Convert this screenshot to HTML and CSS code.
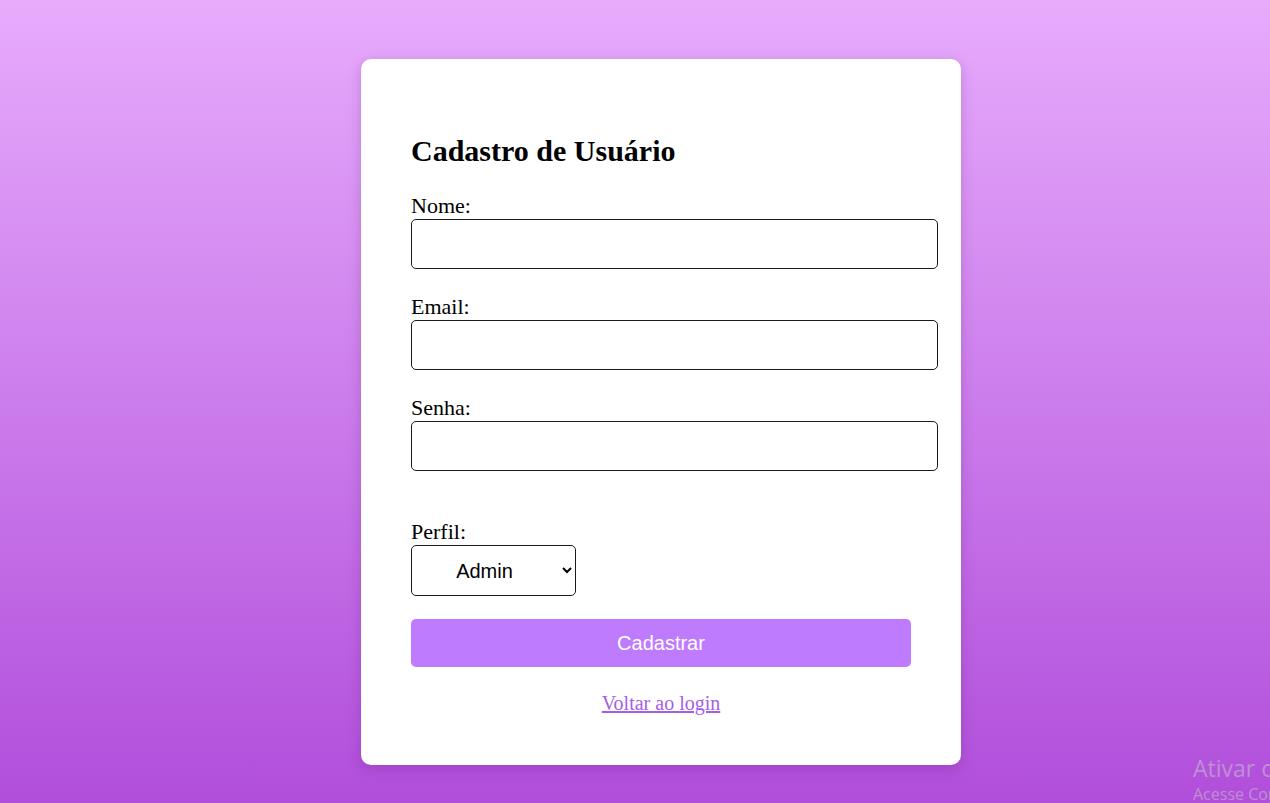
FILE: index.html
```html
<!DOCTYPE html>
<html lang="pt-BR">
<head>
<meta charset="utf-8">
<title>Cadastro de Usuário</title>
<link rel="stylesheet" href="styles.css">
</head>
<body>
  <main class="card">
    <h2 class="title">Cadastro de Usuário</h2>
    <form class="form">
      <label class="label" for="nome">Nome:</label>
      <input class="field" id="nome" type="text">
      <label class="label" for="email">Email:</label>
      <input class="field" id="email" type="email">
      <label class="label" for="senha">Senha:</label>
      <input class="field" id="senha" type="password">
      <label class="label label-perfil" for="perfil">Perfil:</label>
      <select class="select" id="perfil">
        <option>Admin</option>
        <option>Usuário</option>
      </select>
      <button class="btn" type="button">Cadastrar</button>
    </form>
    <p class="back"><a class="back-link" href="#">Voltar ao login</a></p>
  </main>
  <div class="watermark">
    <div class="wm-title">Ativar o Windows</div>
    <div class="wm-sub">Acesse Configurações para ativar o Windows.</div>
  </div>
</body>
</html>
```

FILE: styles.css
```css
html, body {
  margin: 0;
  height: 100%;
}
body {
  min-height: 803px;
  background: linear-gradient(to bottom, #e7abfc 0%, #b14edb 100%);
  font-family: "Liberation Serif", "Times New Roman", serif;
  font-size: 20px;
  color: #000;
  padding: 59px 0 0 52px;
  box-sizing: border-box;
  overflow: hidden;
  position: relative;
}
.card {
  width: 500px;
  margin: 0 auto;
  background: #fff;
  border-radius: 10px;
  padding: 50px;
  box-shadow: 0 4px 14px rgba(80, 20, 110, 0.22);
}
.title {
  font-size: 30px;
  line-height: 34px;
  font-weight: bold;
  margin: 25px 0 25px;
}
.form {
  display: flex;
  flex-direction: column;
  align-items: flex-start;
}
.label {
  font-size: 22px;
  line-height: 26px;
  display: block;
}
.field {
  width: calc(100% + 27px);
  box-sizing: border-box;
  height: 50px;
  padding: 12px 13px;
  border: 1px solid #1a1a1a;
  border-radius: 5px;
  margin: 0 0 25px;
  font-size: 16px;
  background: #fff;
}
.label-perfil {
  margin-top: 23px;
}
.select {
  width: 165px;
  height: 51px;
  border: 1px solid #1a1a1a;
  border-radius: 5px;
  background: #fff;
  font-family: "Liberation Sans", Arial, sans-serif;
  font-size: 20px;
  text-align: center;
  text-align-last: center;
  color: #000;
  padding: 0 6px 0 0;
  margin: 0 0 23px;
}
.btn {
  width: 500px;
  height: 48px;
  border: none;
  border-radius: 5px;
  background: #bf7bfd;
  color: #fff;
  font-family: "Liberation Sans", Arial, sans-serif;
  font-size: 20px;
  cursor: pointer;
}
.back {
  text-align: center;
  margin: 25px 0 0;
  line-height: 23px;
}
.back-link {
  color: #a45ee9;
  text-decoration: underline;
}
.watermark {
  position: absolute;
  left: 1193px;
  top: 752px;
  white-space: nowrap;
  color: rgba(200, 200, 200, 0.55);
  font-family: "Open Sans", "Noto Sans", sans-serif;
}
.wm-title {
  font-size: 23px;
  line-height: 32px;
}
.wm-sub {
  font-size: 16px;
  line-height: 20px;
}
```
